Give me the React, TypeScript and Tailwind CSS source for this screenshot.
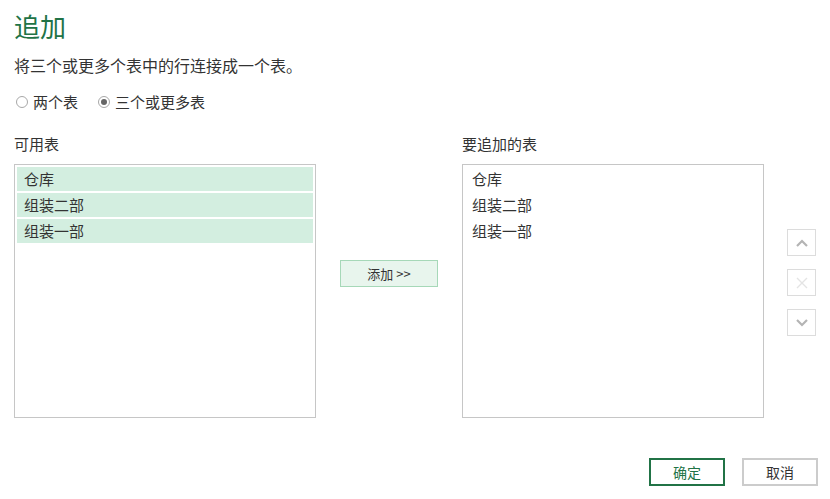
import React from "react";

const tables = ["仓库", "组装二部", "组装一部"];

const font = "font-['Microsoft_YaHei','Noto_Sans_CJK_SC',sans-serif]";

const Radio = ({ checked, label }: { checked?: boolean; label: string }) => (
    <label className="flex items-center gap-[5px]">
        <span className="flex h-[12px] w-[12px] items-center justify-center rounded-full border border-[#a8a8a8] bg-white">
            {checked && <span className="h-[6px] w-[6px] rounded-full bg-[#666]" />}
        </span>
        <span>{label}</span>
    </label>
);

const SideButton = ({ children }: { children: React.ReactNode }) => (
    <button className="flex h-[27px] w-[29px] items-center justify-center border border-[#dcdcdc] bg-white">
        {children}
    </button>
);

export default function App() {
    return (
        <div className={`${font} h-[499px] w-[830px] bg-white px-[14px] text-[#333]`}>
            <h1 className="pt-[9px] text-[26px] leading-[34px] text-[#217346]">追加</h1>
            <p className="mt-[11px] text-[16px] leading-[22px]">将三个或更多个表中的行连接成一个表。</p>

            <div className="mt-[16px] flex h-[20px] items-center gap-[20px] pl-[2px] text-[15px]">
                <Radio label="两个表" />
                <Radio checked label="三个或更多表" />
            </div>

            <div className="mt-[22px] flex">
                {/* 可用表 */}
                <div className="w-[302px]">
                    <div className="h-[30px] text-[15px] leading-[20px]">可用表</div>
                    <div className="h-[254px] border border-[#c6c6c6] p-[2px]">
                        {tables.map((t) => (
                            <div
                                key={t}
                                className="mb-[2px] h-[24px] bg-[#d3eee0] px-[7px] text-[15px] leading-[24px]"
                            >
                                {t}
                            </div>
                        ))}
                    </div>
                </div>

                <div className="flex w-[146px] justify-center pt-[126px]">
                    <button className="h-[27px] w-[98px] border border-[#a6d8b8] bg-[#e8f5ed] text-[13px] text-[#333]">
                        添加 &gt;&gt;
                    </button>
                </div>

                {/* 要追加的表 */}
                <div className="w-[302px]">
                    <div className="h-[30px] text-[15px] leading-[20px]">要追加的表</div>
                    <div className="h-[254px] border border-[#c6c6c6] p-[2px]">
                        {tables.map((t) => (
                            <div key={t} className="mb-[2px] h-[24px] px-[7px] text-[15px] leading-[24px]">
                                {t}
                            </div>
                        ))}
                    </div>
                </div>

                <div className="ml-[23px] flex flex-col gap-[13px] pt-[95px]">
                    <SideButton>
                        <svg width="12" height="8" viewBox="0 0 12 8">
                            <path d="M1 7 L6 2 L11 7" fill="none" stroke="#b4b4b4" strokeWidth="2.2" />
                        </svg>
                    </SideButton>
                    <SideButton>
                        <svg width="12" height="12" viewBox="0 0 12 12">
                            <path d="M1 1 L11 11 M11 1 L1 11" fill="none" stroke="#e4e4e4" strokeWidth="1.4" />
                        </svg>
                    </SideButton>
                    <SideButton>
                        <svg width="12" height="8" viewBox="0 0 12 8">
                            <path d="M1 1 L6 6 L11 1" fill="none" stroke="#b4b4b4" strokeWidth="2.2" />
                        </svg>
                    </SideButton>
                </div>
            </div>

            <div className="mt-[40px] flex justify-end gap-[17px]">
                <button className="h-[28px] w-[76px] border-2 border-[#217346] bg-white text-[14px] text-[#217346]">
                    确定
                </button>
                <button className="mr-[-2px] h-[28px] w-[76px] border-2 border-[#cccccc] bg-white text-[14px] text-[#333]">
                    取消
                </button>
            </div>
        </div>
    );
}
